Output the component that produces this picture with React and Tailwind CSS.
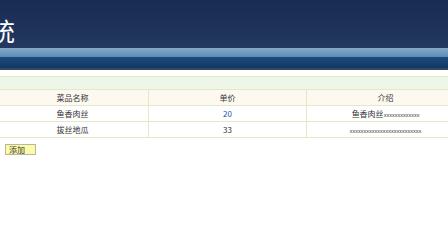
export default function App() {
  const cell = "border border-[#e3e9c6] text-center align-middle";
  const font = { fontFamily: '"Noto Sans CJK SC", "Liberation Sans", sans-serif' };
  return (
    <div className="w-[448px] h-[252px] bg-white overflow-hidden" style={font}>
      <div className="h-[48px] bg-gradient-to-b from-[#1a2c54] via-[#1d3159] to-[#23395f] flex items-center">
        <span className="text-white text-[25px] leading-none ml-[-10px] mt-[12px]" style={{ fontFamily: '"Noto Sans CJK SC", sans-serif' }}>统</span>
      </div>
      <div className="h-[9px] bg-gradient-to-b from-[#86abcb] to-[#5e8ab3]"></div>
      <div className="h-[11px] bg-gradient-to-b from-[#1b4c7f] to-[#123863]"></div>
      <div className="h-[2px] bg-[#3a4660]"></div>
      <div className="h-[6px] bg-white"></div>
      <table className="ml-[-4px] w-[468px] border-collapse table-fixed text-[8px] text-[#333]">
        <colgroup>
          <col className="w-[152px]" />
          <col className="w-[158px]" />
          <col className="w-[158px]" />
        </colgroup>
        <tbody>
          <tr className="h-[13px] bg-[#eef6ea]">
            <td colSpan={3} className="border border-[#e3e9c6]"></td>
          </tr>
          <tr className="h-[16px] bg-[#fdf8f0]">
            <td className={cell}>菜品名称</td>
            <td className={cell}>单价</td>
            <td className={cell}>介绍</td>
          </tr>
          <tr className="h-[16px]">
            <td className={cell}>鱼香肉丝</td>
            <td className={cell + " text-[#2255a4]"}>20</td>
            <td className={cell}>鱼香肉丝<span className="text-[5.5px]" style={{ fontFamily: '"Liberation Sans", sans-serif' }}>xxxxxxxxxxxxx</span></td>
          </tr>
          <tr className="h-[16px]">
            <td className={cell}>拔丝地瓜</td>
            <td className={cell}>33</td>
            <td className={cell}><span className="text-[5.5px]" style={{ fontFamily: '"Liberation Sans", sans-serif' }}>xxxxxxxxxxxxxxxxxxxxxxxxxx</span></td>
          </tr>
        </tbody>
      </table>
      <div className="mt-[6px] ml-[5px] w-[31px] h-[11px] bg-[#fbfba8] border border-[#b8b8a0] text-[8px] leading-[9px] text-[#333] pl-[3px]">添加</div>
    </div>
  );
}
